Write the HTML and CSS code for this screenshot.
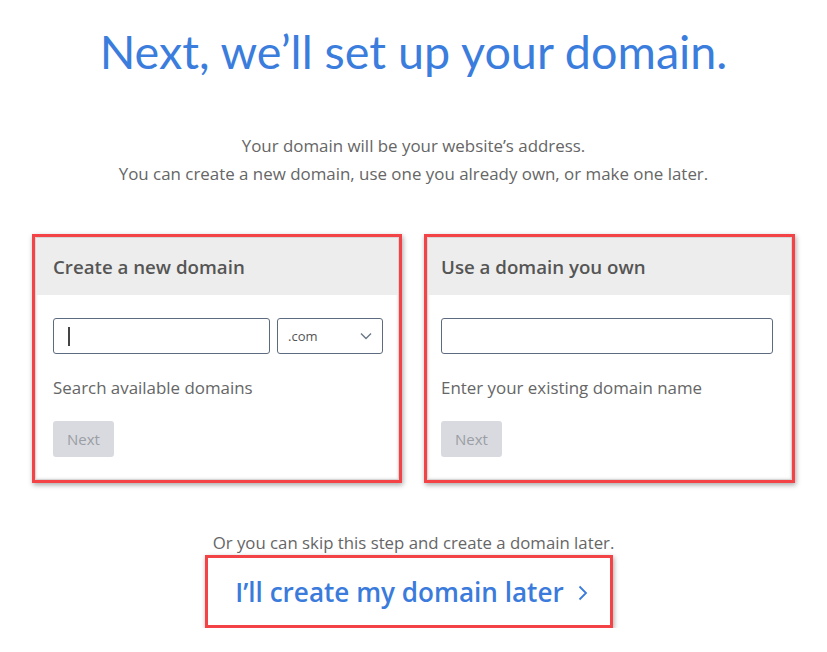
FILE: index.html
```html
<!DOCTYPE html>
<html>
<head>
<meta charset="utf-8">
<link rel="stylesheet" href="styles.css">
</head>
<body>
<div class="page">
  <h1 class="title">Next, we’ll set up your domain.</h1>
  <p class="intro">Your domain will be your website’s address.<br>You can create a new domain, use one you already own, or make one later.</p>
  <div class="cards">
    <div class="mark">
      <div class="card">
        <div class="card-head">Create a new domain</div>
        <div class="card-body">
          <div class="row">
            <div class="input grow"><span class="caret"></span></div>
            <div class="input select"><span class="tld">.com</span>
              <svg class="chev" width="12" height="8" viewBox="0 0 12 8"><path d="M1 1.5 L6 6.5 L11 1.5" fill="none" stroke="#6b7788" stroke-width="1.4"/></svg>
            </div>
          </div>
          <div class="hint">Search available domains</div>
          <div class="btn">Next</div>
        </div>
      </div>
    </div>
    <div class="mark right">
      <div class="card">
        <div class="card-head">Use a domain you own</div>
        <div class="card-body">
          <div class="row">
            <div class="input grow"></div>
          </div>
          <div class="hint">Enter your existing domain name</div>
          <div class="btn">Next</div>
        </div>
      </div>
    </div>
  </div>
  <p class="skip">Or you can skip this step and create a domain later.</p>
  <div class="later-wrap">
    <div class="later">I’ll create my domain later
      <svg class="arrow" width="10" height="16" viewBox="0 0 10 16"><path d="M1.5 1.5 L8 8 L1.5 14.5" fill="none" stroke="#3a7bdc" stroke-width="1.8"/></svg>
    </div>
  </div>
</div>
</body>
</html>
```
FILE: styles.css
```css
html, body { margin: 0; padding: 0; background: #fff; }
body { font-family: "Open Sans", "Liberation Sans", sans-serif; color: #666; }
.page { width: 827px; padding-top: 23px; }
.title {
  margin: 0;
  text-align: center;
  font-family: "Lato", "Open Sans", sans-serif;
  font-weight: 400;
  font-size: 46.7px;
  line-height: 56px;
  color: #3b7ddd;
}
.intro {
  margin: 53px 0 0;
  text-align: center;
  font-size: 16.9px;
  line-height: 28px;
  color: #666;
}
.cards {
  display: flex;
  gap: 22px;
  padding: 0 32px;
  margin-top: 46px;
}
.mark {
  width: 364px;
  border: 3px solid #f44346;
  box-shadow: 1px 2px 5px rgba(0,0,0,0.35);
}
.mark.right { width: 365px; }
.card {
  border: 1px solid #d6d6d6;
  box-shadow: inset 0 0 3px rgba(0,0,0,0.15);
  height: 243px;
  box-sizing: border-box;
}
.card-head {
  background: #ededed;
  height: 57px;
  padding-left: 17px;
  display: flex;
  align-items: center;
  font-size: 18.7px;
  font-weight: 600;
  color: #555;
}
.card-body { padding: 23px 15px 0 17px; }
.right .card-head { padding-left: 13px; }
.right .card-body { padding: 23px 18px 0 13px; }
.row { display: flex; gap: 7px; }
.input {
  height: 36px;
  box-sizing: border-box;
  border: 1px solid #5d6b80;
  border-radius: 3px;
  display: flex;
  align-items: center;
  position: relative;
}
.grow { flex: 1; }
.caret { display: block; width: 1.5px; height: 19px; background: #444; margin-left: 14px; }
.select { width: 106px; padding: 0 10px; justify-content: space-between; }
.tld { font-size: 13px; color: #555; }
.hint { margin-top: 23px; font-size: 16.9px; line-height: 22px; color: #666; }
.btn {
  margin-top: 22px;
  width: 61px;
  height: 36px;
  border-radius: 3px;
  background: #d8dadf;
  color: #9b9ea4;
  font-size: 15px;
  display: flex;
  align-items: center;
  justify-content: center;
}
.skip {
  margin: 48px 0 0;
  text-align: center;
  font-size: 16.8px;
  line-height: 24px;
  color: #666;
}
.later-wrap { display: flex; justify-content: center; }
.later {
  width: 396px;
  height: 67px;
  border: 3px solid #f44346;
  box-shadow: 1px 2px 5px rgba(0,0,0,0.35);
  display: flex;
  align-items: center;
  justify-content: center;
  gap: 14px;
  padding-left: 6px;
  box-sizing: content-box;
  font-size: 26.1px;
  font-weight: 600;
  color: #3a7bdc;
  margin-left: -10px;
}
.arrow { margin-top: 3px; }
```
